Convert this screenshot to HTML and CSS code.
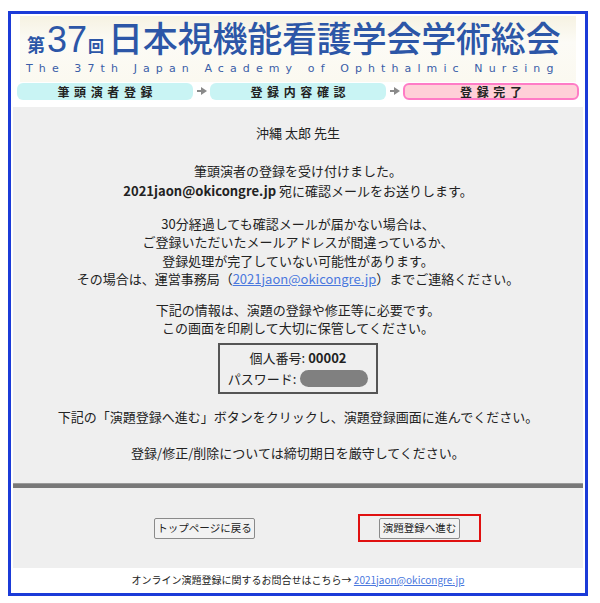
FILE: index.html
```html
<!DOCTYPE html>
<html lang="ja">
<head>
<meta charset="utf-8">
<title>登録完了</title>
<link rel="stylesheet" href="styles.css">
</head>
<body>
<div class="frame">
  <div class="banner">
    <div class="title">
      <span class="t-dai">第</span><span class="t-num">37</span><span class="t-kai">回</span><span class="t-main">日本視機能看護学会学術総会</span>
    </div>
    <div class="subtitle">The 37th Japan Academy of Ophthalmic Nursing</div>
  </div>
  <div class="steps">
    <div class="step">筆頭演者登録</div>
    <div class="arrow"><svg width="10" height="8" viewBox="0 0 10 8"><rect x="0" y="3" width="5" height="2" fill="#8a8a8a"/><polygon points="4,0 10,4 4,8" fill="#8a8a8a"/></svg></div>
    <div class="step">登録内容確認</div>
    <div class="arrow"><svg width="10" height="8" viewBox="0 0 10 8"><rect x="0" y="3" width="5" height="2" fill="#8a8a8a"/><polygon points="4,0 10,4 4,8" fill="#8a8a8a"/></svg></div>
    <div class="step current">登録完了</div>
  </div>
  <div class="panel">
    <div class="message">
      <p class="name">沖縄 太郎 先生</p>
      <p class="accepted">筆頭演者の登録を受け付けました。</p>
      <p class="mailto"><b>2021jaon@okicongre.jp</b> 宛に確認メールをお送りします。</p>
      <p class="notice">30分経過しても確認メールが届かない場合は、<br>ご登録いただいたメールアドレスが間違っているか、<br>登録処理が完了していない可能性があります。<br>その場合は、運営事務局（<a href="#">2021jaon@okicongre.jp</a>）までご連絡ください。</p>
      <p class="keep">下記の情報は、演題の登録や修正等に必要です。<br>この画面を印刷して大切に保管してください。</p>
      <div class="creds">
        <div class="cred-row">個人番号: <b>00002</b></div>
        <div class="cred-row">パスワード:<span class="masked"></span></div>
      </div>
      <p class="next">下記の「演題登録へ進む」ボタンをクリックし、演題登録画面に進んでください。</p>
      <p class="deadline">登録/修正/削除については締切期日を厳守してください。</p>
    </div>
    <div class="divider"></div>
    <div class="actions">
      <button class="btn btn-top" type="button">トップページに戻る</button>
      <div class="highlight"><button class="btn btn-next" type="button">演題登録へ進む</button></div>
    </div>
  </div>
  <div class="footer">オンライン演題登録に関するお問合せはこちら→ <a href="#">2021jaon@okicongre.jp</a></div>
</div>
</body>
</html>
```
FILE: styles.css
```css
* { box-sizing: border-box; }
html, body { margin: 0; padding: 0; background: #ffffff; }
body {
  font-family: "Noto Sans CJK JP", "Noto Sans", sans-serif;
  color: #222;
}
.frame {
  margin: 11px 0 0 8px;
  width: 580px;
  height: 585px;
  border: 3px solid #1b3bd8;
  padding: 2px 2px 0 2px;
  display: flex;
  flex-direction: column;
}
.banner {
  margin: 0 7px;
  height: 66px;
  background: linear-gradient(to bottom, #f6f2e2 0%, #fcfbf6 40%, #fbf9f0 100%);
  padding: 3px 0 0 7px;
}
.title {
  display: flex;
  align-items: baseline;
  color: #2c56a7;
  line-height: 36px;
  height: 40px;
}
.t-dai { font-size: 18px; font-weight: 700; }
.t-num { font-family: "Liberation Sans", Arial, sans-serif; font-size: 36px; margin: 0 1px 0 2px; }
.t-kai { font-size: 16px; font-weight: 700; margin-right: 4px; }
.t-main { font-size: 35px; font-weight: 500; letter-spacing: -0.2px; }
.subtitle {
  font-family: "DejaVu Sans", Verdana, sans-serif;
  font-size: 11px;
  color: #3a5ea8;
  letter-spacing: 6.1px;
  line-height: 14px;
  margin-top: 3px;
  margin-left: -1px;
  white-space: nowrap;
}
.steps {
  margin: 0 4px;
  display: flex;
  align-items: center;
  height: 18px;
}
.step {
  width: 176px;
  height: 17px;
  border-radius: 6px;
  background: #c9f4f4;
  font-size: 12px;
  font-weight: 700;
  line-height: 17px;
  letter-spacing: 4.6px;
  text-indent: 4.6px;
  text-align: center;
  color: #222;
}
.step.current {
  background: #ffd0d8;
  border: 2px solid #ff7cc6;
  line-height: 13px;
}
.arrow {
  width: 17px;
  display: flex;
  justify-content: center;
  align-items: center;
}
.panel {
  margin-top: 7px;
  background: #efefef;
  height: 461px;
  display: flex;
  flex-direction: column;
}
.message {
  text-align: center;
  font-size: 13px;
  line-height: 18.5px;
  height: 376px;
  padding-top: 17px;
}
.message p { margin: 0; }
.message b { font-weight: 700; }
.message a, .footer a { color: #4a78de; }
.accepted { margin-top: 19px !important; }
.mailto { margin-top: 2px !important; }
.notice { margin-top: 14px !important; }
.keep { margin-top: 12px !important; }
.creds {
  width: 160px;
  margin: 5px auto 0;
  border: 2px solid #555;
  padding: 2px 0 3px;
  line-height: 21px;
}
.cred-row { display: flex; justify-content: center; align-items: center; gap: 3px; }
.masked {
  display: inline-block;
  width: 68px;
  height: 17px;
  border-radius: 9px;
  background: #808080;
  margin-left: 1px;
}
.next { margin-top: 14px !important; }
.deadline { margin-top: 18px !important; }
.divider {
  height: 5px;
  background: #787878;
  border-top: 1px solid #9a9a9a;
}
.actions {
  flex: 1;
  display: flex;
  align-items: center;
  justify-content: center;
  gap: 103px;
  padding: 0 0 0 39px;
}
.btn {
  font-family: "Noto Sans CJK JP", sans-serif;
  font-size: 10.5px;
  color: #222;
  background: #f2f2f2;
  border: 1px solid #8a8a8a;
  border-radius: 2px;
  height: 21px;
  padding: 0;
  line-height: 18px;
}
.btn-top { width: 101px; }
.btn-next { width: 81px; }
.highlight {
  border: 2px solid #e01010;
  height: 28px;
  width: 123px;
  display: flex;
  align-items: center;
  justify-content: center;
}
.footer {
  flex: 1;
  text-align: center;
  font-size: 10px;
  line-height: 24px;
  color: #222;
}
```
